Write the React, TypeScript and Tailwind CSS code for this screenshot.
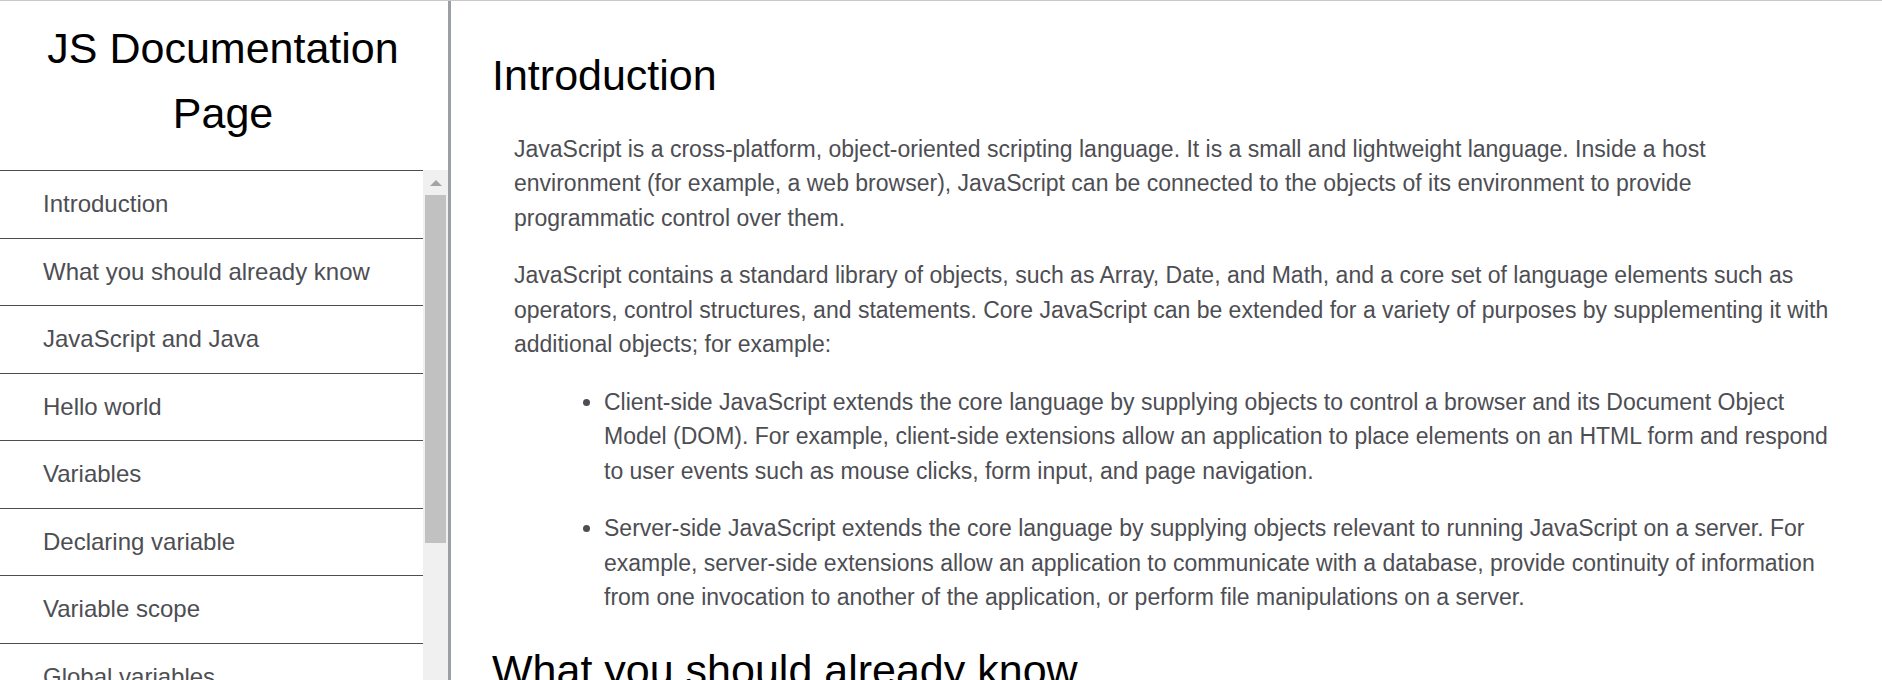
const sections = [
  'Introduction',
  'What you should already know',
  'JavaScript and Java',
  'Hello world',
  'Variables',
  'Declaring variable',
  'Variable scope',
  'Global variables',
  'Constants',
  'Data types',
];

const toId = (title: string) => title.replace(/ /g, '_');

function ScrollTrack() {
  return (
    <div className="flex w-[25px] shrink-0 flex-col items-center bg-[#f0f0f0]">
      <button type="button" aria-label="Scroll up" className="flex h-[25px] w-full shrink-0 items-center justify-center">
        <svg width="12" height="6" viewBox="0 0 12 6" fill="#a3a3a3" aria-hidden="true">
          <path d="M0 6 L6 0 L12 6 Z" />
        </svg>
      </button>
      <div className="h-[348px] w-[21px] shrink-0 bg-[#c1c1c1]" />
    </div>
  );
}

function Sidebar() {
  return (
    <nav className="flex w-[451px] shrink-0 flex-col border-r-3 border-[#9b9fa3]">
      <header className="mt-[15px] mb-[25px] pr-[22px] pl-5 text-center text-[43px] leading-normal text-black">
        JS Documentation Page
      </header>
      <div className="flex min-h-0 flex-1">
        <ul className="min-w-0 flex-1 overflow-hidden text-[24px]">
          {sections.map((title) => (
            <li key={title} className="border-t border-[#4d4e53]">
              <a href={`#${toId(title)}`} className="block py-4 pl-[43px]">
                {title}
              </a>
            </li>
          ))}
        </ul>
        <ScrollTrack />
      </div>
    </nav>
  );
}

export default function App() {
  return (
    <div className="flex h-screen overflow-hidden border-t border-[#c8c8c8] bg-white font-['Liberation_Sans',Arial,sans-serif] text-[23px] leading-[150%] text-[#4d4e53]">
      <Sidebar />
      <main className="min-w-0 flex-1 overflow-hidden pt-[42px] pr-[50px] pl-[41px]">
        <section id="Introduction" className="mb-[23px]">
          <h2 className="text-[43px] leading-normal text-black">Introduction</h2>
          <div className="mt-6 flex flex-col gap-[23px] pl-[22px]">
            <p>
              JavaScript is a cross-platform, object-oriented scripting language. It is a small and lightweight
              language. Inside a host environment (for example, a web browser), JavaScript can be connected to the
              objects of its environment to provide programmatic control over them.
            </p>
            <p>
              JavaScript contains a standard library of objects, such as Array, Date, and Math, and a core set of
              language elements such as operators, control structures, and statements. Core JavaScript can be extended
              for a variety of purposes by supplementing it with additional objects; for example:
            </p>
            <ul className="flex list-disc flex-col gap-[23px] pl-[90px]">
              <li>
                Client-side JavaScript extends the core language by supplying objects to control a browser and its
                Document Object Model (DOM). For example, client-side extensions allow an application to place elements
                on an HTML form and respond to user events such as mouse clicks, form input, and page navigation.
              </li>
              <li>
                Server-side JavaScript extends the core language by supplying objects relevant to running JavaScript on
                a server. For example, server-side extensions allow an application to communicate with a database,
                provide continuity of information from one invocation to another of the application, or perform file
                manipulations on a server.
              </li>
            </ul>
          </div>
        </section>
        <section id="What_you_should_already_know">
          <h2 className="text-[43px] leading-normal text-black">What you should already know</h2>
        </section>
      </main>
    </div>
  );
}
